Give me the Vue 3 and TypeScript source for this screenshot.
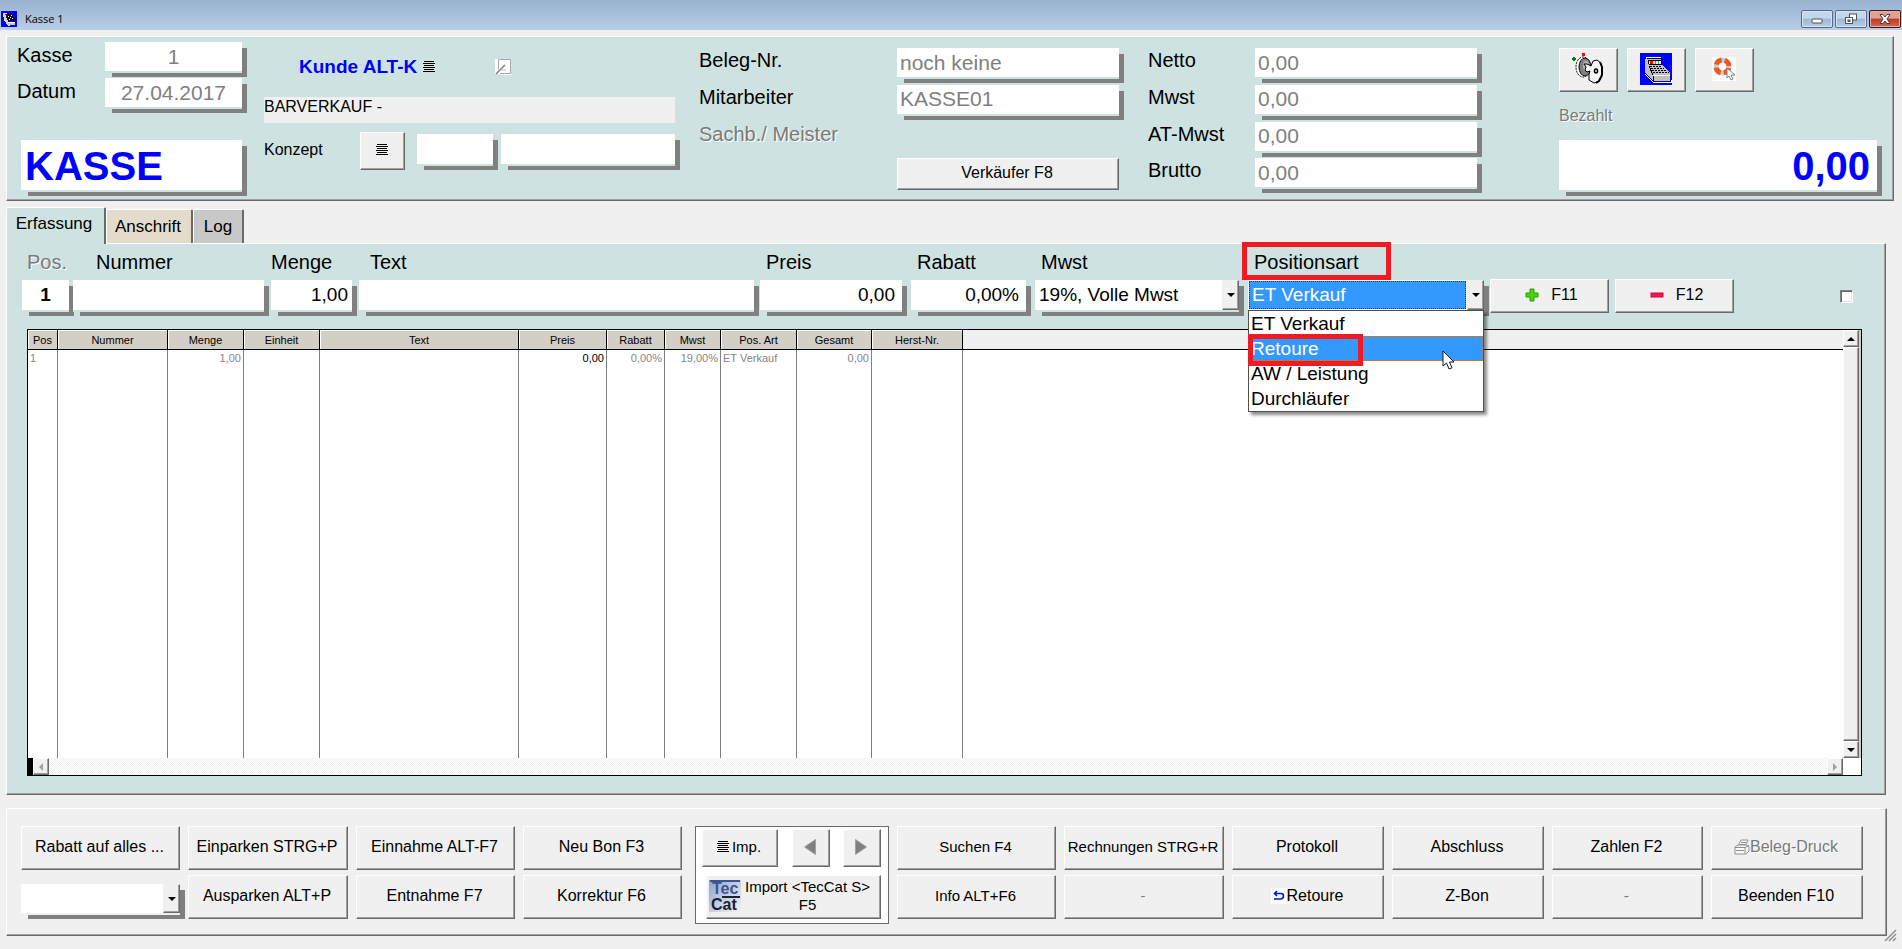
<script setup lang="ts">
import { ref } from 'vue'

interface Column {
  title: string
  width: number
  value: string
  align: 'left' | 'right'
  dark?: boolean
}

const columns: Column[] = [
  { title: 'Pos', width: 30, value: '1', align: 'left' },
  { title: 'Nummer', width: 110, value: '', align: 'left' },
  { title: 'Menge', width: 76, value: '1,00', align: 'right' },
  { title: 'Einheit', width: 76, value: '', align: 'left' },
  { title: 'Text', width: 199, value: '', align: 'left' },
  { title: 'Preis', width: 88, value: '0,00', align: 'right', dark: true },
  { title: 'Rabatt', width: 58, value: '0,00%', align: 'right' },
  { title: 'Mwst', width: 56, value: '19,00%', align: 'right' },
  { title: 'Pos. Art', width: 76, value: 'ET Verkauf', align: 'left' },
  { title: 'Gesamt', width: 75, value: '0,00', align: 'right' },
  { title: 'Herst-Nr.', width: 91, value: '', align: 'left' },
]

const sums = [
  { id: 'netto', label: 'Netto' },
  { id: 'mwst-sum', label: 'Mwst' },
  { id: 'at-mwst', label: 'AT-Mwst' },
  { id: 'brutto', label: 'Brutto' },
]

const kinds: string[] = ['ET Verkauf', 'Retoure', 'AW / Leistung', 'Durchläufer']
const kind = ref('ET Verkauf')
const hovered = ref('Retoure')
const tax = ref('19%, Volle Mwst')
</script>

<template>
  <div class="window">
    <header class="titlebar">
      <svg class="app-icon" width="16" height="16" viewBox="0 0 16 16" shape-rendering="crispEdges">
        <rect width="16" height="16" fill="#0000f0" />
        <path d="M2 2h4l1 9 2 4H7L3 9z" fill="#d8d8d8" />
        <path d="M5 3h6l3 5v2H7L5 6z" fill="#101010" />
        <path d="M7 5h1v1H7zM9 6h1v1H9zM11 7h1v1h-1zM8 8h1v1H8zM10 4h1v1h-1z" fill="#fff" />
        <path d="M4 3h2v1H4z" fill="#e00" />
        <path d="M7 11h7v3H8z" fill="#c8c8c8" />
        <path d="M7 11h7v1H7z" fill="#fff" />
      </svg>
      <h1>Kasse 1</h1>
      <div class="window-buttons">
        <button type="button" aria-label="Minimieren">
          <svg width="12" height="10" viewBox="0 0 12 10"><rect x="1" y="5" width="10" height="4" rx="1" fill="#fff" stroke="#4c5360" /></svg>
        </button>
        <button type="button" aria-label="Wiederherstellen">
          <svg width="14" height="12" viewBox="0 0 14 12"><g fill="#fff" stroke="#4c5360"><rect x="5.500" y="1" width="7" height="6" /><rect x="1.500" y="4.500" width="7" height="6" /><rect x="4" y="7" width="2" height="1.500" fill="#7c96b5" /></g></svg>
        </button>
        <button type="button" class="close" aria-label="Schließen">
          <svg width="14" height="12" viewBox="0 0 14 12"><path d="M2 1.500h3l2 2.500 2-2.500h3L9 6l3 4.500H9L7 8l-2 2.500H2L5 6z" fill="#fff" stroke="#4a3a44" stroke-width="1" /></svg>
        </button>
      </div>
    </header>

    <section class="panel top-panel">
      <div class="col-desk">
        <div class="pair"><label for="kasse">Kasse</label><input id="kasse" class="field muted center" value="1" readonly /></div>
        <div class="pair"><label for="datum">Datum</label><input id="datum" class="field muted center" value="27.04.2017" readonly /></div>
        <input class="field huge desk-name" aria-label="Kassenname" value="KASSE" readonly />
      </div>

      <div class="col-customer">
        <div class="customer-head">
          <a href="#kunde">Kunde ALT-K</a>
          <svg width="12" height="12" viewBox="0 0 12 12" shape-rendering="crispEdges"><path d="M1 0h10v1H1zM0 2h12v1H0zM1 4h10v1H1zM0 6h12v1H0zM1 8h10v1H1zM0 10h12v1H0z" /></svg>
          <svg class="note" width="16" height="16" viewBox="0 0 16 16"><rect x="0" y="0" width="16" height="16" fill="#fff" /><path d="M3.500 10V.5h12v14H5" fill="none" stroke="#a8a8a8" /><path d="M0 15.500h5" stroke="#d8dcdc" /><path d="M1 15l9-9" stroke="#808080" stroke-width="1.500" /><path d="M6 11h5" stroke="#c0c0c0" /></svg>
        </div>
        <output class="customer-name">BARVERKAUF -</output>
        <div class="concept">
          <label for="konzept">Konzept</label>
          <button type="button" class="btn" aria-label="Konzept wählen">
            <svg width="12" height="12" viewBox="0 0 12 12" shape-rendering="crispEdges"><path d="M1 0h10v1H1zM0 2h12v1H0zM1 4h10v1H1zM0 6h12v1H0zM1 8h10v1H1zM0 10h12v1H0z" /></svg>
          </button>
          <input id="konzept" class="field short" />
          <input class="field" aria-label="Konzept Text" />
        </div>
      </div>

      <div class="col-receipt">
        <div class="pair"><label for="beleg">Beleg-Nr.</label><input id="beleg" class="field muted" value="noch keine" readonly /></div>
        <div class="pair"><label for="mitarbeiter">Mitarbeiter</label><input id="mitarbeiter" class="field muted" value="KASSE01" readonly /></div>
        <div class="pair"><span class="label disabled">Sachb./ Meister</span></div>
        <div class="pair"><span class="label"></span><button type="button" class="btn seller">Verkäufer F8</button></div>
      </div>

      <div class="col-sums">
        <div v-for="s in sums" :key="s.id" class="pair">
          <label :for="s.id">{{ s.label }}</label><input :id="s.id" class="field muted" value="0,00" readonly />
        </div>
      </div>

      <div class="col-paid">
        <div class="tools">
          <button type="button" class="btn" aria-label="Schublade öffnen">
            <svg width="34" height="34" viewBox="0 0 34 34">
              <path d="M11 1h3v3h-3z" fill="#f00" />
              <path d="M2 5h2v1h1v2H4v1H2V8H1V6h1z" fill="#008000" />
              <ellipse cx="12" cy="15" rx="7" ry="10" fill="#fff" stroke="#000" stroke-dasharray="2 1" />
              <ellipse cx="14" cy="15" rx="6" ry="9" fill="#808080" stroke="#000" />
              <ellipse cx="15" cy="14" rx="3" ry="5" fill="#b8b8b8" />
              <path d="M13 12l3 0 4 2 2-5 4-1 4 3 1 6v6l-3 6-5 2-5-3 0-6 1-3-3 1-2-2 1-3z" fill="#f4f4f4" stroke="#000" />
              <path d="M29 10l2 5v8l-3 6-3 2" fill="none" stroke="#000" stroke-width="2" />
              <ellipse cx="25" cy="19" rx="1.500" ry="2" fill="#fff" stroke="#000" stroke-width="1.500" />
            </svg>
          </button>
          <button type="button" class="btn" aria-label="Kasse">
            <svg width="32" height="32" viewBox="0 0 32 32" shape-rendering="crispEdges">
              <rect width="32" height="32" fill="#00f" />
              <path d="M5 6l2-2h14l1 7 8 9v8H13L5 20z" fill="#c0c0c0" />
              <path d="M7 5h14l1 7M5 20l8 8M9 13l4 9" fill="none" stroke="#000" />
              <path d="M8 7h13v4H9z" fill="#e8e8e8" stroke="#000" />
              <path d="M10 8h3v3h-3z" fill="#f00" />
              <path d="M15 8h1v3h-1zM18 8h1v3h-1z" fill="#808080" />
              <path d="M10 13h12M11 15h13M12 17h15M13 19h16" stroke="#000" stroke-width="1" stroke-dasharray="2 1" />
              <path d="M13 22h17v6H13z" fill="#c0c0c0" stroke="#0000a0" />
              <path d="M13 22h17M6 4h15M5 21l8 8h18v-2" fill="none" stroke="#fff" />
            </svg>
          </button>
          <button type="button" class="btn" aria-label="Hilfe">
            <svg width="24" height="24" viewBox="0 0 24 24">
              <rect width="24" height="24" fill="#fff" />
              <circle cx="10.500" cy="9.500" r="6.500" fill="none" stroke="#c9cdd4" stroke-width="5" />
              <circle cx="10.500" cy="9.500" r="6.500" fill="none" stroke="#ee5a24" stroke-width="5" stroke-dasharray="7 3.210" stroke-dashoffset="-1.600" />
              <path d="M15 11v10l2-2 2 4 2-1-2-4h4z" fill="#fff" stroke="#808080" />
            </svg>
          </button>
        </div>
        <label class="disabled small" for="bezahlt">Bezahlt</label>
        <input id="bezahlt" class="field huge right" value="0,00" readonly />
      </div>
    </section>

    <nav class="tabs">
      <button type="button" class="tab active">Erfassung</button>
      <button type="button" class="tab sand">Anschrift</button>
      <button type="button" class="tab grey">Log</button>
    </nav>

    <section class="panel entry-panel">
      <form class="entry" @submit.prevent>
        <div class="cell"><label class="disabled" for="e-pos">Pos.</label><input id="e-pos" class="field bold center" value="1" readonly /></div>
        <div class="cell nummer"><label for="e-nr">Nummer</label><input id="e-nr" class="field" /></div>
        <div class="cell menge"><label for="e-menge">Menge</label><input id="e-menge" class="field right" value="1,00" /></div>
        <div class="cell text"><label for="e-text">Text</label><input id="e-text" class="field" /></div>
        <div class="cell wide-gap"><label for="e-preis">Preis</label><input id="e-preis" class="field right" value="0,00" /></div>
        <div class="cell wide-gap"><label for="e-rabatt">Rabatt</label><input id="e-rabatt" class="field right" value="0,00%" /></div>
        <div class="cell wide-gap">
          <label for="e-mwst">Mwst</label>
          <div class="field combo">
            <select id="e-mwst" v-model="tax"><option>19%, Volle Mwst</option></select>
            <span class="arrow"><svg width="8" height="4" viewBox="0 0 8 4"><path d="M0 0h8L4 4z" /></svg></span>
          </div>
        </div>
        <div class="cell kind">
          <label for="e-art">Positionsart</label>
          <div class="field combo focused">
            <select id="e-art" v-model="kind"><option v-for="k in kinds" :key="k">{{ k }}</option></select>
            <span class="arrow"><svg width="8" height="4" viewBox="0 0 8 4"><path d="M0 0h8L4 4z" /></svg></span>
          </div>
          <span class="mark mark-label"></span>
          <div class="menu">
            <ul class="options" role="listbox" aria-label="Positionsart">
              <li v-for="k in kinds" :key="k" role="option" :aria-selected="k === hovered" :class="{ hot: k === hovered }" @mouseenter="hovered = k" @click="kind = k">{{ k }}</li>
            </ul>
            <span class="mark mark-option"></span>
            <svg class="pointer" width="13" height="20" viewBox="0 0 13 20"><path d="M1 1v15l3.500-3 2.500 6 3-1.200-2.500-5.800H12z" fill="#fff" stroke="#101828" /></svg>
          </div>
        </div>
        <div class="cell action">
          <button type="button" class="btn">
            <svg width="14" height="14" viewBox="0 0 14 14"><path d="M5 1h4v4h4v4H9v4H5V9H1V5h4z" fill="#44d800" stroke="#2f9a10" /></svg>F11
          </button>
        </div>
        <div class="cell action last">
          <button type="button" class="btn">
            <svg width="14" height="14" viewBox="0 0 14 14"><rect x="1" y="5" width="12" height="4" fill="#ff1050" stroke="#c80a40" /></svg>F12
          </button>
          <input class="tick" type="checkbox" aria-label="Auswahl" />
        </div>
      </form>

      <div class="grid">
        <div class="grid-body">
          <table>
            <colgroup>
              <col v-for="c in columns" :key="c.title" :style="{ width: c.width + 'px' }" />
              <col />
            </colgroup>
            <thead>
              <tr>
                <th v-for="c in columns" :key="c.title" scope="col">{{ c.title }}</th>
                <td class="filler"></td>
              </tr>
            </thead>
            <tbody>
              <tr>
                <td v-for="c in columns" :key="c.title" :class="[c.align, { dark: c.dark }]">{{ c.value }}</td>
                <td class="filler"></td>
              </tr>
            </tbody>
          </table>
          <div class="vscroll">
            <button type="button" aria-label="Nach oben"><svg width="8" height="4" viewBox="0 0 8 4"><path d="M0 4h8L4 0z" /></svg></button>
            <div class="thumb"></div>
            <button type="button" aria-label="Nach unten"><svg width="8" height="4" viewBox="0 0 8 4"><path d="M0 0h8L4 4z" /></svg></button>
          </div>
        </div>
        <div class="hscroll">
          <span class="split"></span>
          <button type="button" disabled aria-label="Nach links"><svg width="4" height="8" viewBox="0 0 4 8"><path d="M4 0v8L0 4z" fill="#a0a0a0" /></svg></button>
          <div class="track"></div>
          <button type="button" disabled aria-label="Nach rechts"><svg width="4" height="8" viewBox="0 0 4 8"><path d="M0 0v8l4-4z" fill="#a0a0a0" /></svg></button>
          <span class="corner"></span>
        </div>
      </div>
    </section>

    <section class="panel footer-panel">
      <button type="button" class="btn">Rabatt auf alles ...</button>
      <button type="button" class="btn">Einparken STRG+P</button>
      <button type="button" class="btn">Einnahme ALT-F7</button>
      <button type="button" class="btn">Neu Bon F3</button>
      <div class="import-box">
        <div class="import-row">
          <button type="button" class="btn imp">
            <svg width="12" height="12" viewBox="0 0 12 12" shape-rendering="crispEdges"><path d="M1 0h10v1H1zM0 2h12v1H0zM1 4h10v1H1zM0 6h12v1H0zM1 8h10v1H1zM0 10h12v1H0z" /></svg>Imp.
          </button>
          <button type="button" class="btn" aria-label="Zurück"><svg width="12" height="16" viewBox="0 0 12 16"><path d="M11.500.5v15L.5 8z" fill="#808080" stroke="#a0a0a0" /></svg></button>
          <button type="button" class="btn" aria-label="Vor"><svg width="12" height="16" viewBox="0 0 12 16"><path d="M.5.5v15l11-7.500z" fill="#808080" stroke="#a0a0a0" /></svg></button>
        </div>
        <button type="button" class="btn teccat">
          <svg width="32" height="36" viewBox="0 0 32 36">
            <defs><linearGradient id="tc" x1="0" y1="0" x2="1" y2="1"><stop offset="0" stop-color="#8ea0cc" /><stop offset=".5" stop-color="#c4cee2" /><stop offset="1" stop-color="#f0f0f0" /></linearGradient></defs>
            <rect y="2" width="32" height="32" fill="url(#tc)" />
            <rect x="1" y="2" width="30" height="2" fill="#3c5494" />
            <rect x="13" y="18" width="18" height="2" fill="#202030" />
            <text x="3" y="16" font-size="16" font-weight="bold" fill="#3c5494">Tec</text>
            <text x="2" y="32" font-size="16" font-weight="bold" fill="#202030">Cat</text>
          </svg>
          <span>Import &lt;TecCat S&gt;<br />F5</span>
        </button>
      </div>
      <button type="button" class="btn mid">Suchen F4</button>
      <button type="button" class="btn mid">Rechnungen STRG+R</button>
      <button type="button" class="btn">Protokoll</button>
      <button type="button" class="btn">Abschluss</button>
      <button type="button" class="btn">Zahlen F2</button>
      <button type="button" class="btn disabled" disabled>
        <svg width="16" height="16" viewBox="0 0 16 16"><g fill="#f8f8f8" stroke="#909090"><path d="M4 7L7 1h7l-3 6z" /><path d="M1 8l3-2h9l2 2v4l-3 3H1z" /><path d="M1 8.500h10v6M11 8.500l4-2M2 11.500h8M7 3.500h5M6 5.500h5" fill="none" /></g></svg>Beleg-Druck
      </button>

      <div class="field combo footer-combo">
        <select aria-label="Rabatt"><option></option></select>
        <span class="arrow"><svg width="8" height="4" viewBox="0 0 8 4"><path d="M0 0h8L4 4z" /></svg></span>
      </div>
      <button type="button" class="btn">Ausparken ALT+P</button>
      <button type="button" class="btn">Entnahme F7</button>
      <button type="button" class="btn">Korrektur F6</button>
      <button type="button" class="btn mid">Info ALT+F6</button>
      <button type="button" class="btn mid disabled" disabled>-</button>
      <button type="button" class="btn">
        <svg width="16" height="16" viewBox="0 0 16 16"><rect width="16" height="16" fill="#fff" /><path d="M6 3L3.500 5.500 6 8M3 5.500h7q2.500 0 2.500 2.500T10 11H3" fill="none" stroke="#0018d0" stroke-width="1.600" /></svg>Retoure
      </button>
      <button type="button" class="btn">Z-Bon</button>
      <button type="button" class="btn disabled" disabled>-</button>
      <button type="button" class="btn">Beenden F10</button>
    </section>
    <svg class="grip" width="13" height="13" viewBox="0 0 13 13"><path d="M1 12L12 1M5 12l7-7M9 12l3-3" stroke="#909090" stroke-width="1.500" /></svg>
  </div>
</template>

<style>
html,
body {
  margin: 0;
  background: #f0f0f0;
}
</style>

<style scoped>
.window {
  --teal: #cee3e1;
  --shade: #808080;
  position: relative;
  box-sizing: border-box;
  display: flex;
  flex-direction: column;
  min-height: 100vh;
  padding-bottom: 13px;
  background: #f0f0f0;
  color: #000;
  font: 16px/20px "Liberation Sans", Arial, sans-serif;
}
.window * {
  box-sizing: border-box;
}
button,
input,
select {
  font: inherit;
  color: inherit;
  margin: 0;
  border-radius: 0;
}
svg {
  flex: none;
}

/* title bar */
.titlebar {
  display: flex;
  align-items: center;
  height: 30px;
  padding: 7px 1px 0;
  background: linear-gradient(#98b1cf, #b7cee8);
}
h1 {
  flex: 1;
  margin: 0 0 0 8px;
  font: 11px/16px "Open Sans", "Noto Sans", sans-serif;
}
.window-buttons {
  display: flex;
  gap: 2px;
}
.window-buttons button {
  display: flex;
  align-items: center;
  justify-content: center;
  width: 32px;
  height: 18px;
  padding: 0;
  border: 1px solid #54698a;
  border-radius: 2px;
  background: linear-gradient(#c3d6ea 45%, #9db8d4 50%, #b6cde6);
  box-shadow: inset 0 0 0 1px #d5e4f4;
}
.window-buttons .close {
  border-color: #43121c;
  background: linear-gradient(#e0a092 45%, #bd3a25 50%, #d06a50);
  box-shadow: inset 0 0 0 1px #e8b0a4;
}

/* bevelled surfaces */
.panel {
  border: 1px solid #fff;
  border-right-color: #696969;
  border-bottom-color: #696969;
  box-shadow: inset -1px -1px #a0a0a0;
}
.btn {
  display: flex;
  align-items: center;
  justify-content: center;
  padding: 0 2px 2px 0;
  border: 1px solid #fff;
  border-right-color: #696969;
  border-bottom-color: #696969;
  box-shadow: inset -1px -1px #a0a0a0;
  background: #f0f0f0;
  white-space: nowrap;
}
.field {
  width: 100%;
  min-width: 0;
  height: 32px;
  padding: 0 4px;
  border: 0;
  border-bottom: 2px solid var(--teal);
  outline: none;
  background: #fff;
  box-shadow: 6px 5px 0 -1px var(--shade);
}
.muted {
  color: #808080;
}
.center {
  text-align: center;
}
.right {
  text-align: right;
}
.bold {
  font-weight: bold;
}
.disabled {
  color: #7a7a7a;
  text-shadow: 1px 1px #fff;
}
.huge {
  height: 52px;
  padding-top: 2px;
  font-size: 40px;
  line-height: 48px;
  font-weight: bold;
  color: #00f;
}

/* top panel */
.top-panel {
  display: grid;
  grid-template-columns: 256fr 435fr 449fr 411fr 333fr;
  height: 165px;
  margin: 6px 8px 0 6px;
  padding: 1px;
  background: var(--teal);
}
.pair {
  display: flex;
  align-items: flex-start;
}
.pair label,
.pair .label {
  flex: none;
  font-size: 20px;
  line-height: 24px;
}
.pair .field {
  flex: 1;
  height: 31px;
  padding: 0 3px;
  font-size: 21px;
}
.col-desk {
  padding: 4px 22px 0 9px;
}
.col-desk .pair {
  height: 36px;
}
.col-desk .pair label {
  width: 88px;
  line-height: 27px;
}
.desk-name {
  display: block;
  width: calc(100% - 4px);
  margin: 26px 0 0 4px;
}
.col-customer {
  padding-right: 24px;
}
.customer-head {
  display: flex;
  align-items: center;
  height: 59px;
  padding: 0 0 2px 35px;
  gap: 6px;
}
.customer-head a {
  font-size: 19px;
  font-weight: bold;
  color: #00f;
  text-decoration: none;
}
.note {
  margin-left: 54px;
}
.customer-name {
  display: block;
  height: 26px;
  background: #f0f0f0;
}
.concept {
  display: flex;
  align-items: center;
  height: 38px;
  margin-top: 9px;
}
.concept label {
  width: 96px;
  padding-bottom: 2px;
}
.concept .btn {
  width: 45px;
  height: 38px;
  margin-right: 12px;
}
.concept .field {
  flex: 1;
  margin-bottom: 2px;
}
.concept .short {
  flex: none;
  width: 76px;
  margin-right: 8px;
}
.col-receipt,
.col-sums {
  display: grid;
  grid-template-rows: repeat(4, 1fr);
  padding: 10px 0 4px;
}
.col-receipt {
  padding-right: 29px;
}
.col-receipt label,
.col-receipt .label {
  width: 198px;
}
.col-receipt .seller {
  flex: 1;
  height: 32px;
}
.col-sums {
  padding-right: 82px;
}
.col-sums label {
  width: 107px;
}
.col-paid {
  padding: 10px 15px 0 0;
}
.tools {
  display: flex;
  gap: 9px;
}
.tools .btn {
  width: 59px;
  height: 44px;
}
.small {
  display: block;
  height: 34px;
  margin-top: 14px;
}
.col-paid .field {
  padding-right: 7px;
}

/* tabs */
.tabs {
  position: relative;
  display: flex;
  align-items: flex-end;
  height: 37px;
  margin: 6px 0 -1px 6px;
  font-size: 17px;
}
.tab {
  height: 34px;
  padding: 0;
  border: 1px solid #fff;
  border-right: 2px solid #696969;
  border-bottom: 0;
  border-radius: 2px 2px 0 0;
  margin-bottom: 1px;
}
.active {
  width: 100px;
  height: 37px;
  padding: 0 3px 4px 0;
  margin-bottom: 0;
  background: var(--teal);
}
.sand {
  width: 87px;
  padding-right: 2px;
  background: #e3dccd;
}
.grey {
  width: 51px;
  background: #c8c8c8;
}

/* entry panel */
.entry-panel {
  display: flex;
  flex: 1;
  flex-direction: column;
  margin: 0 16px 0 6px;
  padding: 6px 1px 18px;
  background: var(--teal);
}
.entry {
  display: grid;
  grid-template-columns: 51fr 198fr 88fr 401fr 151fr 124fr 213fr 242fr 125fr 269fr;
  height: 63px;
  padding-left: 14px;
  font-size: 19px;
}
.cell {
  position: relative;
  display: flex;
  flex-direction: column;
  gap: 6px;
  padding-right: 4px;
}
.cell label {
  padding-left: 5px;
  font-size: 20px;
  line-height: 24px;
}
.nummer {
  padding-right: 7px;
}
.nummer label {
  padding-left: 23px;
}
.menge {
  padding-right: 7px;
}
.menge label {
  padding-left: 0;
}
.text {
  padding-right: 6px;
}
.text label {
  padding-left: 11px;
}
.wide-gap {
  padding-right: 9px;
}
.wide-gap label,
.kind label {
  padding-left: 6px;
}
.wide-gap .right {
  padding-right: 7px;
}
.kind {
  padding-right: 6px;
}
.combo {
  display: flex;
  padding: 0;
}
.combo select {
  flex: 1;
  min-width: 0;
  padding: 0 4px;
  border: 0;
  outline: none;
  appearance: none;
  background: #fff;
}
.combo .arrow {
  display: flex;
  align-items: center;
  justify-content: center;
  width: 17px;
  border: 1px solid #f0f0f0;
  border-right-color: #696969;
  border-bottom-color: #696969;
  box-shadow: inset -1px -1px #a0a0a0;
  background: #f0f0f0;
}
.focused select {
  padding: 0 2px;
  margin: 1px;
  border: 1px dotted #503000;
  background: #3399ff;
  color: #fff;
}
.mark {
  position: absolute;
  border: 5px solid #ed1c24;
  pointer-events: none;
}
.mark-label {
  top: -8px;
  left: -6px;
  width: 149px;
  height: 38px;
}
.menu {
  position: absolute;
  z-index: 5;
  top: 60px;
  left: 0;
  right: 6px;
  border: 1px solid #505050;
  background: #fff;
  box-shadow: 3px 3px 3px rgb(0 0 0 / 45%);
}
.options {
  margin: 0;
  padding: 0;
  list-style: none;
}
.options li {
  padding-left: 2px;
  line-height: 25px;
}
.options .hot {
  background: #3399ff;
  color: #fff;
  outline: 1px dotted #c87828;
  outline-offset: -1px;
}
.mark-option {
  top: 23px;
  left: -1px;
  width: 115px;
  height: 32px;
}
.pointer {
  position: absolute;
  top: 39px;
  right: 28px;
}
.action {
  padding: 29px 6px 0 0;
  font-size: 16px;
}
.action .btn {
  width: 100%;
  height: 34px;
  padding-left: 6px;
  gap: 12px;
}
.last {
  flex-direction: row;
  align-items: center;
  justify-content: space-between;
  padding-right: 31px;
}
.last .btn {
  width: 119px;
}
.tick {
  width: 13px;
  height: 13px;
  appearance: none;
  border: 1px solid #808080;
  border-right-color: #fff;
  border-bottom-color: #fff;
  background: #fff;
  box-shadow: inset 1px 1px #696969, inset -1px -1px #e3e3e3;
}

/* position table */
.grid {
  display: flex;
  flex: 1;
  flex-direction: column;
  margin: 16px 22px 0 19px;
  border: 1px solid #000;
  background: #fff;
}
.grid-body {
  display: flex;
  flex: 1;
}
table {
  flex: 1;
  table-layout: fixed;
  border-collapse: separate;
  border-spacing: 0;
  font-size: 11px;
  line-height: 14px;
}
th,
thead .filler {
  height: 20px;
  padding: 0;
  border-bottom: 1px solid #000;
  background: #f0f0f0;
}
th {
  border-right: 1px solid #000;
  background: #d4cfc6;
  box-shadow: inset 1px 1px #fff;
  font-weight: normal;
}
tbody td {
  padding: 1px 2px;
  border-right: 1px solid #808080;
  color: #868686;
  vertical-align: top;
  white-space: nowrap;
}
tbody .filler {
  border: 0;
}
tbody .dark {
  color: #000;
}
.vscroll {
  display: flex;
  flex-direction: column;
  width: 18px;
  padding-right: 2px;
  background: #d4cfc6;
}
.vscroll button,
.hscroll button,
.thumb {
  display: flex;
  flex: none;
  align-items: center;
  justify-content: center;
  width: 16px;
  height: 17px;
  padding: 0;
  border: 1px solid #fff;
  border-right-color: #696969;
  border-bottom-color: #696969;
  box-shadow: inset -1px -1px #a0a0a0;
  background: #f0f0f0;
}
.vscroll .thumb {
  flex: 1;
}
.hscroll {
  display: flex;
  height: 17px;
}
.split {
  width: 5px;
  background: #000;
}
.track {
  flex: 1;
  background: repeating-conic-gradient(#f0f0f0 0 25%, #fff 0 50%) 0 0 / 2px 2px;
}
.corner {
  width: 18px;
}

/* footer */
.footer-panel {
  display: grid;
  grid-template-columns: 159fr 160fr 159fr 159fr 199fr 159fr 160fr 152fr 152fr 151fr 152fr;
  grid-template-rows: 44px 44px;
  gap: 5px 8px;
  margin: 13px 15px 0 6px;
  padding: 17px 23px 16px 14px;
}
.footer-panel .mid {
  font-size: 15px;
}
.import-box {
  grid-row: 1 / 3;
  grid-column: 5;
  margin: 0 0 -5px 5px;
  padding: 2px 7px 4px 6px;
  border: 1px solid #696969;
  background: #fff;
  font-size: 15px;
}
.import-row {
  display: flex;
  justify-content: space-between;
  gap: 13px;
}
.import-row .btn {
  width: 38px;
  height: 38px;
}
.import-row .imp {
  width: 76px;
  gap: 3px;
}
.import-box .teccat {
  justify-content: flex-start;
  width: calc(100% - 4px);
  height: 44px;
  margin: 8px 0 0 4px;
  padding-left: 2px;
  gap: 4px;
  line-height: 18px;
}
.footer-combo {
  align-self: center;
  height: 31px;
  margin-top: 5px;
  border-bottom-color: #f0f0f0;
}
.grip {
  position: absolute;
  right: 5px;
  bottom: 7px;
}
</style>
